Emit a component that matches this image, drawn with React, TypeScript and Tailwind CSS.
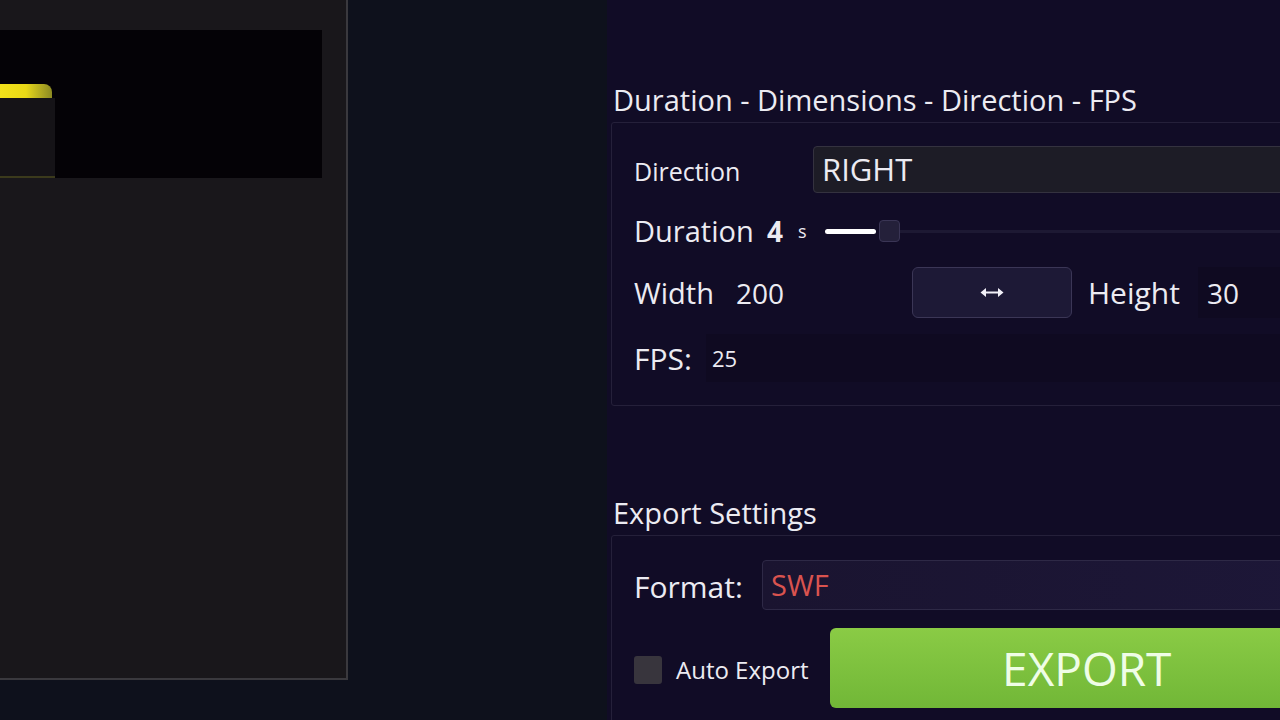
import { useState } from 'react';

// 右側の設定パネル
function SettingsPanel() {
  const [autoExport, setAutoExport] = useState(false);

  return (
    <div className="w-[760px] shrink-0 h-full bg-[#110c26] pl-[4px] pt-[84px] text-[#ecebf2]">
      <h2 className="h-[32px] pl-[2px] text-[29px] leading-[32px] whitespace-nowrap">
        Duration - Dimensions - Direction - FPS
      </h2>

      <div className="mt-[6px] border border-[#25203a] rounded-[3px] px-[22px] pt-[23px] pb-[23px]">
        {/* Direction */}
        <div className="flex items-center h-[47px]">
          <span className="w-[179px] pt-[5px] text-[25px]">Direction</span>
          <div className="flex-1 h-full flex items-center px-[8px] bg-[#1d1c26] border border-[#34323f] rounded-[4px] text-[31px]">
            RIGHT
          </div>
        </div>

        {/* Duration */}
        <div className="flex items-center h-[28px] mt-[24px]">
          <span className="w-[133px] text-[29px]">Duration</span>
          <span className="w-[31px] text-[28px] font-bold">4</span>
          <span className="w-[27px] text-[18px]">s</span>
          <div className="flex items-center flex-1">
            <div className="w-[51px] h-[5px] bg-white rounded-sm" />
            <div className="ml-[3px] w-[21px] h-[22px] bg-[#24203a] border border-[#3a3555] rounded-[4px]" />
            <div className="flex-1 h-[3px] bg-[#1d1933]" />
          </div>
        </div>

        {/* Width / Height */}
        <div className="flex items-center h-[51px] mt-[22px]">
          <span className="w-[102px] text-[29px]">Width</span>
          <span className="w-[176px] text-[28px]">200</span>
          <button className="w-[160px] h-full flex items-center justify-center bg-[#1d1936] border border-[#3b3656] rounded-md">
            <svg width="24" height="11" viewBox="0 0 24 11">
              <path d="M4 5.5h16" stroke="#f2f0f8" strokeWidth="2" />
              <path d="M0.5 5.5L6 1v9z M23.5 5.5L18 1v9z" fill="#f2f0f8" />
            </svg>
          </button>
          <span className="ml-[16px] text-[30px]">Height</span>
          <div className="ml-[18px] flex-1 h-full flex items-center px-[9px] bg-[#0f0a21] text-[28px]">30</div>
        </div>

        {/* FPS */}
        <div className="flex items-center h-[48px] mt-[16px]">
          <span className="text-[30px]">FPS:</span>
          <div className="ml-[14px] flex-1 h-full flex items-center px-[6px] bg-[#0f0a21] text-[22px]">25</div>
        </div>
      </div>

      <h2 className="mt-[91px] h-[32px] pl-[2px] text-[29px] leading-[32px]">Export Settings</h2>

      <div className="mt-[6px] border border-[#25203a] rounded-[3px] px-[22px] pt-[24px] pb-[20px]">
        {/* Format */}
        <div className="flex items-center h-[50px]">
          <span className="w-[128px] pt-[2px] text-[30px]">Format:</span>
          <div className="flex-1 h-full flex items-center px-[8px] bg-gradient-to-r from-[#1a1430] to-[#1d1738] border border-[#2e2946] rounded-[4px] text-[29px] text-[#d9534f]">
            SWF
          </div>
        </div>

        {/* Auto export + export button */}
        <div className="flex items-center h-[80px] mt-[18px]">
          <button
            onClick={() => setAutoExport(!autoExport)}
            className="w-[28px] h-[28px] bg-[#38353d] rounded-[3px] mt-[3px]"
          />
          <span className="ml-[14px] text-[24px] mt-[3px]">Auto Export</span>
          <button className="ml-[21px] flex-1 h-full bg-gradient-to-b from-[#8acb45] to-[#71b737] rounded-md text-[46px] text-[#effde6]">
            EXPORT
          </button>
        </div>
      </div>
    </div>
  );
}

export default function App() {
  return (
    <div
      className="flex w-[1280px] h-[720px] overflow-hidden bg-[#0e111c]"
      style={{ fontFamily: '"Open Sans", "Noto Sans", sans-serif' }}
    >
      {/* プレビュー */}
      <div className="w-[348px] h-[680px] shrink-0 bg-[#19171b] border-r-2 border-b-2 border-[#3a393e] pt-[30px]">
        <div className="w-[322px] h-[148px] bg-[#040206] pt-[54px]">
          <div className="w-[55px]">
            <div className="h-[14px] w-[52px] bg-gradient-to-r from-[#f3e21a] via-[#e8d816] to-[#8c8a22] rounded-tr-[8px]" />
            <div className="h-[80px] bg-[#151317] border-b-2 border-[#3b3a1c]" />
          </div>
        </div>
      </div>

      <div className="w-[259px] shrink-0" />

      <SettingsPanel />
    </div>
  );
}
